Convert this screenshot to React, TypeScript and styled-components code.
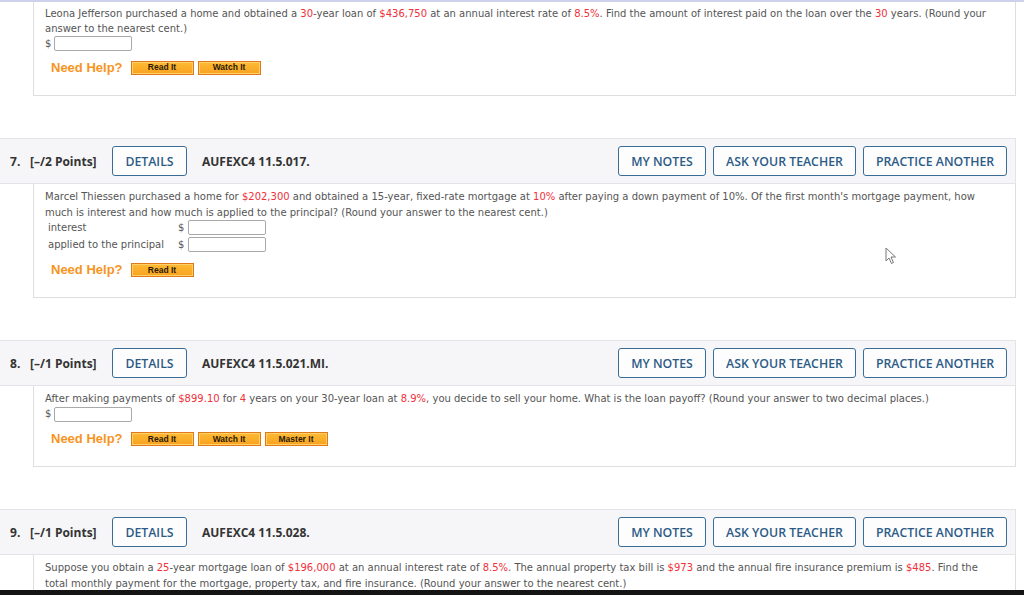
import React from 'react';
import styled, { createGlobalStyle } from 'styled-components';

const GlobalStyle = createGlobalStyle`
  html, body {
    margin: 0;
    padding: 0;
    background: #ffffff;
  }
`;

const Page = styled.div`
  position: relative;
  width: 1024px;
  height: 595px;
  display: flex;
  flex-direction: column;
  overflow: hidden;
  background: #ffffff;
`;

const TopStrip = styled.div`
  flex-shrink: 0;
  height: 2px;
  background: #cdd2ea;
`;

const Content = styled.div`
  flex: 1;
  width: 1016px;
  overflow: hidden;
`;

const ScreenEdge = styled.div`
  flex-shrink: 0;
  height: 5px;
  background: #141414;
`;

const Question = styled.section`
  margin-top: 42px;
`;

const Header = styled.div`
  height: 44px;
  display: flex;
  align-items: center;
  padding: 0 8px 0 10px;
  background: #f6f6f8;
  border: 1px solid #e4e4e8;
  border-left: none;
`;

const HeadText = styled.span`
  font-family: 'Open Sans', sans-serif;
  font-weight: 700;
  font-size: 12px;
  color: #333;
`;

const Num = styled(HeadText)`
  width: 20px;
`;

const Points = styled(HeadText)`
  width: 82px;
`;

const Code = styled(HeadText)`
  flex: 1;
  margin-left: 15px;
`;

const Tool = styled.button<{ $w: number }>`
  box-sizing: border-box;
  width: ${({ $w }) => $w}px;
  height: 30px;
  padding: 0;
  background: #fdfdfe;
  border: 1.5px solid #3a6c98;
  border-radius: 3px;
  font-family: 'Open Sans', sans-serif;
  font-weight: 600;
  font-size: 12.3px;
  color: #2c5b86;
  & + & {
    margin-left: 7px;
  }
`;

const Body = styled.div<{ $tight?: boolean }>`
  margin-left: 33px;
  width: 958px;
  padding: ${({ $tight }) => ($tight ? '4px' : '5px')} 12px 20px 11px;
  border: 1px solid #dedede;
  border-top: none;
  font-family: 'DejaVu Sans', Verdana, sans-serif;
  font-size: 10px;
  line-height: ${({ $tight }) => ($tight ? '15px' : '16px')};
  color: #555;
`;

const Text = styled.div``;

const Red = styled.span`
  color: #f0303a;
`;

const AnswerRow = styled.div`
  display: flex;
  align-items: center;
  height: 16px;
  margin-top: -1px;
`;

const Dollar = styled.span`
  width: 9px;
`;

const Box = styled.span`
  display: inline-block;
  box-sizing: border-box;
  width: 78px;
  height: 15px;
  border: 1px solid #a9a9a9;
  border-radius: 2px;
  background: #fff;
`;

const Table = styled.div`
  display: grid;
  grid-template-columns: 130px 10px 78px;
  grid-auto-rows: 17px;
  align-items: center;
  margin-top: -2px;
  padding-left: 3px;
`;

const Help = styled.div`
  display: flex;
  align-items: center;
  margin-top: 9px;
  margin-left: 6px;
  height: 15px;
`;

const HelpLabel = styled.span`
  font-family: 'Liberation Sans', Arial, sans-serif;
  font-weight: 700;
  font-size: 13px;
  color: #f7941e;
  margin-right: 8px;
`;

const HelpButton = styled.span`
  box-sizing: border-box;
  display: inline-flex;
  align-items: center;
  justify-content: center;
  width: 63px;
  height: 14px;
  background: linear-gradient(#fdbb35, #f8a21f);
  border: 1px solid #e07a18;
  box-shadow: inset 0 0 0 1px #ffd06a;
  font-family: 'Liberation Sans', Arial, sans-serif;
  font-weight: 700;
  font-size: 8.5px;
  color: #2a1a05;
  & + & {
    margin-left: 4px;
  }
`;

const Cursor = styled.svg`
  position: absolute;
  left: 885px;
  top: 247px;
`;

type HeadProps = {
  n: number;
  pts: string;
  code: string;
};

function QHeader({ n, pts, code }: HeadProps) {
  return (
    <Header>
      <Num>{n}.</Num>
      <Points>{pts}</Points>
      <Tool $w={75}>DETAILS</Tool>
      <Code>{code}</Code>
      <Tool $w={88}>MY NOTES</Tool>
      <Tool $w={143}>ASK YOUR TEACHER</Tool>
      <Tool $w={144}>PRACTICE ANOTHER</Tool>
    </Header>
  );
}

function NeedHelp({ items }: { items: string[] }) {
  return (
    <Help>
      <HelpLabel>Need Help?</HelpLabel>
      {items.map((i) => (
        <HelpButton key={i}>{i}</HelpButton>
      ))}
    </Help>
  );
}

function Answer() {
  return (
    <AnswerRow>
      <Dollar>$</Dollar>
      <Box />
    </AnswerRow>
  );
}

export default function App() {
  return (
    <>
      <GlobalStyle />
      <Page>
        <TopStrip />
        <Content>
          <Body $tight>
            <Text>
              Leona Jefferson purchased a home and obtained a <Red>30</Red>-year loan of <Red>$436,750</Red> at an
              annual interest rate of <Red>8.5%</Red>. Find the amount of interest paid on the loan over the{' '}
              <Red>30</Red> years. (Round your answer to the nearest cent.)
            </Text>
            <Answer />
            <NeedHelp items={['Read It', 'Watch It']} />
          </Body>

          <Question>
            <QHeader n={7} pts="[–/2 Points]" code="AUFEXC4 11.5.017." />
            <Body>
              <Text>
                Marcel Thiessen purchased a home for <Red>$202,300</Red> and obtained a 15-year, fixed-rate mortgage
                at <Red>10%</Red> after paying a down payment of 10%. Of the first month's mortgage payment, how much
                is interest and how much is applied to the principal? (Round your answer to the nearest cent.)
              </Text>
              <Table>
                <span>interest</span>
                <span>$</span>
                <Box />
                <span>applied to the principal</span>
                <span>$</span>
                <Box />
              </Table>
              <NeedHelp items={['Read It']} />
            </Body>
          </Question>

          <Question>
            <QHeader n={8} pts="[–/1 Points]" code="AUFEXC4 11.5.021.MI." />
            <Body>
              <Text>
                After making payments of <Red>$899.10</Red> for <Red>4</Red> years on your 30-year loan at{' '}
                <Red>8.9%</Red>, you decide to sell your home. What is the loan payoff? (Round your answer to two
                decimal places.)
              </Text>
              <Answer />
              <NeedHelp items={['Read It', 'Watch It', 'Master It']} />
            </Body>
          </Question>

          <Question>
            <QHeader n={9} pts="[–/1 Points]" code="AUFEXC4 11.5.028." />
            <Body>
              <Text>
                Suppose you obtain a <Red>25</Red>-year mortgage loan of <Red>$196,000</Red> at an annual interest
                rate of <Red>8.5%</Red>. The annual property tax bill is <Red>$973</Red> and the annual fire
                insurance premium is <Red>$485</Red>. Find the total monthly payment for the mortgage, property tax,
                and fire insurance. (Round your answer to the nearest cent.)
              </Text>
              <Answer />
            </Body>
          </Question>
        </Content>
        <ScreenEdge />
        <Cursor width="12" height="18" viewBox="0 0 12 18">
          <path d="M1 1 L1 14 L4 11 L6.5 16.5 L8.5 15.5 L6 10 L10.5 10 Z" fill="#fff" stroke="#777" strokeWidth="1" />
        </Cursor>
      </Page>
    </>
  );
}
